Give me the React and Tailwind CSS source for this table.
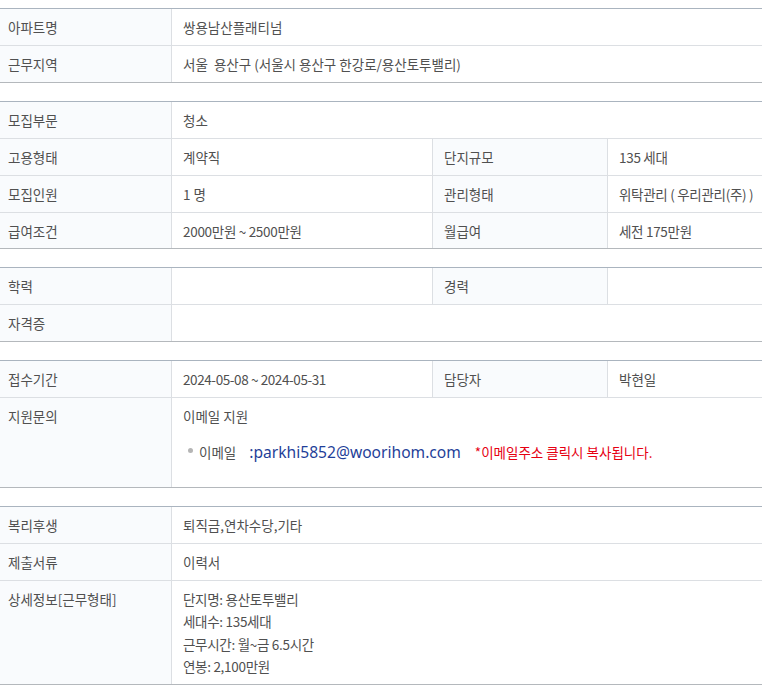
import React from 'react';

const font = { fontFamily: '"Noto Sans CJK KR", "Noto Sans", sans-serif' };

const Label = ({ children, top = false, className = '' }) => (
    <div className={`bg-[#f9fbfd] pl-2 pr-2 flex ${top ? 'items-start' : 'items-center'} ${className}`}>
        {children}
    </div>
);

const Value = ({ children, className = '' }) => (
    <div className={`border-l border-[#dcdfe3] pl-[11px] pr-2 flex items-center ${className}`}>
        {children}
    </div>
);

const Row = ({ children, last = false, className = '' }) => (
    <div className={`grid grid-cols-[171px_261px_175px_1fr] ${last ? '' : 'border-b border-[#dcdfe3]'} ${className}`}>
        {children}
    </div>
);

const Table = ({ children }) => (
    <div className="border-t border-t-[#aab4bf] border-b border-b-[#b4b8bc]">{children}</div>
);

export default function App() {
    return (
        <div className="bg-white w-[762px] min-h-[693px] pt-2 text-[13.5px] leading-[18px] text-[#505050] flex flex-col gap-[18px]" style={font}>
            {/* 기본정보 */}
            <Table>
                <Row className="h-[37px]">
                    <Label>아파트명</Label>
                    <Value className="col-span-3">쌍용남산플래티넘</Value>
                </Row>
                <Row last className="h-9">
                    <Label>근무지역</Label>
                    <Value className="col-span-3">서울&nbsp; 용산구 (서울시 용산구 한강로/용산토투밸리)</Value>
                </Row>
            </Table>

            {/* 모집조건 */}
            <Table>
                <Row className="h-[37px]">
                    <Label>모집부문</Label>
                    <Value className="col-span-3">청소</Value>
                </Row>
                <Row className="h-[37px]">
                    <Label>고용형태</Label>
                    <Value>계약직</Value>
                    <Value className="bg-[#f9fbfd]">단지규모</Value>
                    <Value className="tracking-[-0.3px]">135 세대</Value>
                </Row>
                <Row className="h-[37px]">
                    <Label>모집인원</Label>
                    <Value>1 명</Value>
                    <Value className="bg-[#f9fbfd]">관리형태</Value>
                    <Value className="whitespace-nowrap tracking-[-0.3px]">위탁관리 ( 우리관리(주) )</Value>
                </Row>
                <Row last className="h-[35px]">
                    <Label>급여조건</Label>
                    <Value className="tracking-[-0.3px]">2000만원 ~ 2500만원</Value>
                    <Value className="bg-[#f9fbfd]">월급여</Value>
                    <Value className="tracking-[-0.3px]">세전 175만원</Value>
                </Row>
            </Table>

            {/* 자격 */}
            <Table>
                <Row className="h-[37px]">
                    <Label>학력</Label>
                    <Value></Value>
                    <Value className="bg-[#f9fbfd]">경력</Value>
                    <Value></Value>
                </Row>
                <Row last className="h-9">
                    <Label>자격증</Label>
                    <Value className="col-span-3"></Value>
                </Row>
            </Table>

            {/* 접수 */}
            <Table>
                <Row className="h-[37px]">
                    <Label>접수기간</Label>
                    <Value className="tracking-[-0.4px]">2024-05-08 ~ 2024-05-31</Value>
                    <Value className="bg-[#f9fbfd]">담당자</Value>
                    <Value>박현일</Value>
                </Row>
                <Row last className="h-[89px]">
                    <Label top className="pt-[9px]">지원문의</Label>
                    <div className="col-span-3 border-l border-[#dcdfe3] pl-[11px] pt-[9px] flex flex-col gap-[18px]">
                        <div>이메일 지원</div>
                        <div className="flex items-center pl-[5px]">
                            <span className="w-[5px] h-[5px] rounded-full bg-[#b5b5b5] mr-[6px] -mt-[4px]"></span>
                            <span>이메일</span>
                            <span className="ml-[13px] text-[15.6px] text-[#1f3f99]" style={{ fontFamily: '"Noto Sans", sans-serif' }}>:parkhi5852@woorihom.com</span>
                            <span className="ml-[14px] text-[#e60012]">*이메일주소 클릭시 복사됩니다.</span>
                        </div>
                    </div>
                </Row>
            </Table>

            {/* 기타 */}
            <Table>
                <Row className="h-[37px]">
                    <Label>복리후생</Label>
                    <Value className="col-span-3">퇴직금,연차수당,기타</Value>
                </Row>
                <Row className="h-[37px]">
                    <Label>제출서류</Label>
                    <Value className="col-span-3">이력서</Value>
                </Row>
                <Row last className="h-[103px]">
                    <Label top className="pt-[9px]">상세정보[근무형태]</Label>
                    <div className="col-span-3 border-l border-[#dcdfe3] pl-[11px] pt-[7px] leading-[22.3px] tracking-[-0.3px]">
                        <div>단지명: 용산토투밸리</div>
                        <div>세대수: 135세대</div>
                        <div>근무시간: 월~금 6.5시간</div>
                        <div>연봉: 2,100만원</div>
                    </div>
                </Row>
            </Table>
        </div>
    );
}
